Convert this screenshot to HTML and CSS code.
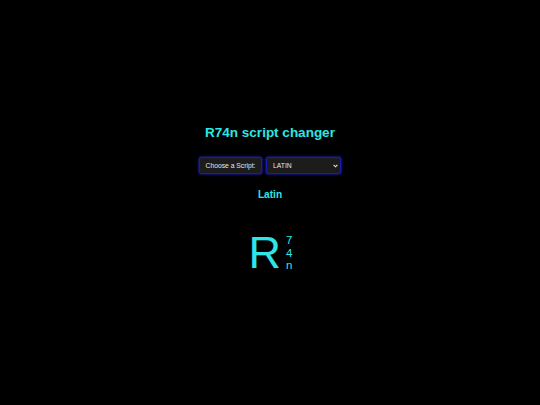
FILE: index.html
```html
<!DOCTYPE html>
<html>
<head>
<meta charset="utf-8">
<link rel="stylesheet" href="styles.css">
</head>
<body>
<main class="page">
  <h1 class="title">R74n script changer</h1>
  <div class="controls">
    <label class="label" for="script">Choose a Script:</label>
    <span class="select-wrap">
      <select class="select" id="script">
        <option>LATIN</option>
      </select>
      <svg class="chevron" width="5" height="4" viewBox="0 0 5 4"><path d="M0.6 0.8 L2.5 2.8 L4.4 0.8" fill="none" stroke="#e6e6e6" stroke-width="1.1"/></svg>
    </span>
  </div>
  <div class="script-name">Latin</div>
  <div class="logo">
    <span class="logo-big">R</span>
    <span class="logo-stack">
      <span>7</span>
      <span>4</span>
      <span>n</span>
    </span>
  </div>
</main>
</body>
</html>
```
FILE: styles.css
```css
html, body {
  margin: 0;
  padding: 0;
  background: #000;
}
body {
  width: 540px;
  height: 405px;
  overflow: hidden;
  font-family: "Liberation Sans", Arial, sans-serif;
  color: #2ee6e6;
}
.page {
  display: flex;
  flex-direction: column;
  align-items: center;
  padding-top: 124px;
}
.title {
  margin: 0;
  font-size: 13.5px;
  line-height: 18px;
  font-weight: bold;
  color: #2ee6e6;
}
.controls {
  margin-top: 15px;
  display: flex;
  gap: 4px;
  height: 17px;
}
.label, .select {
  box-sizing: border-box;
  height: 17px;
  background: #1c1c1c;
  border: 1px solid #1a1ab0;
  border-radius: 2px;
  box-shadow: 0 0 3px #2a2aff;
  color: #e6e6e6;
  font-family: "Liberation Sans", Arial, sans-serif;
  font-size: 6.75px;
}
.label {
  width: 63px;
  display: flex;
  align-items: center;
  justify-content: center;
}
.select-wrap {
  position: relative;
  display: block;
  width: 75px;
  height: 17px;
}
.select {
  appearance: none;
  -webkit-appearance: none;
  display: block;
  width: 75px;
  margin: 0;
  padding: 0 8px 0 6px;
  outline: none;
}
.chevron {
  position: absolute;
  right: 3px;
  top: 7px;
  pointer-events: none;
}
.script-name {
  margin-top: 12px;
  font-size: 10.1px;
  line-height: 18px;
  font-weight: bold;
}
.logo {
  margin-top: 26px;
  display: flex;
  align-items: center;
  gap: 5px;
  margin-left: 1px;
}
.logo-big {
  font-size: 45px;
  line-height: 46px;
}
.logo-stack {
  display: flex;
  flex-direction: column;
  align-items: center;
  font-size: 11.5px;
  line-height: 12.5px;
}
```
